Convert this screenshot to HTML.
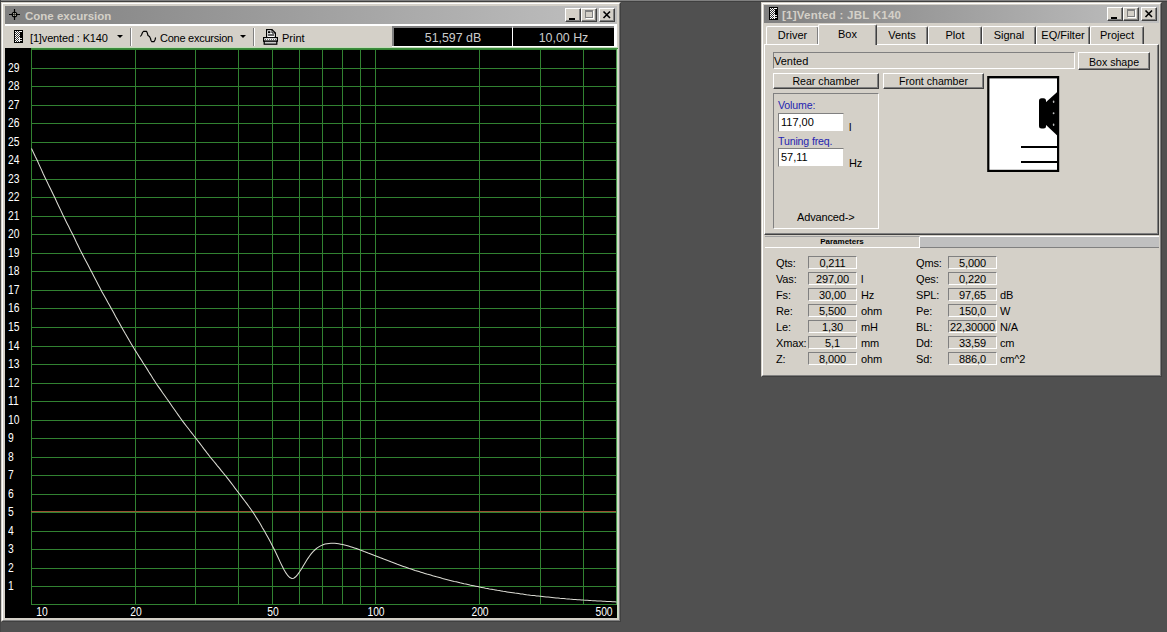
<!DOCTYPE html>
<html><head><meta charset="utf-8">
<style>
*{box-sizing:border-box;margin:0;padding:0}
html,body{width:1167px;height:632px;overflow:hidden;background:#505050;font-family:"Liberation Sans",sans-serif;font-size:11px;color:#000}
.abs{position:absolute}
.win{position:absolute;background:#d4d0c8;border-top:1px solid #d4d0c8;border-left:1px solid #d4d0c8;border-right:1px solid #404040;border-bottom:1px solid #404040}
.win>.in{position:absolute;left:0;top:0;right:0;bottom:0;border-top:1px solid #fff;border-left:1px solid #fff;border-right:1px solid #808080;border-bottom:1px solid #808080}
.title{position:absolute;height:18px;background:linear-gradient(to right,#808080,#c0c0c0);color:#d4d0c8;font-weight:bold;font-size:11px;line-height:18px;white-space:nowrap}
.tb{position:absolute;width:16px;height:14px;background:#d4d0c8;border-top:1px solid #fff;border-left:1px solid #fff;border-right:1px solid #404040;border-bottom:1px solid #404040;box-shadow:inset -1px -1px 0 #808080}
.sunk{border-top:1px solid #808080;border-left:1px solid #808080;border-right:1px solid #fff;border-bottom:1px solid #fff}
.yl{position:absolute;left:7.5px;width:20px;height:15px;line-height:15px;color:#fff;font-size:12px;transform:scaleX(0.86);transform-origin:0 0}
.xl{position:absolute;top:605.2px;width:40px;text-align:center;height:15px;line-height:15px;color:#fff;font-size:12px;transform:scaleX(0.86)}
.btn{position:absolute;background:#d4d0c8;border-top:1px solid #fff;border-left:1px solid #fff;border-right:1px solid #404040;border-bottom:1px solid #404040;box-shadow:inset -1px -1px 0 #808080;text-align:center;white-space:nowrap}
.fld{position:absolute;width:49px;height:13px;border-top:1px solid #808080;border-left:1px solid #808080;border-right:1px solid #fff;border-bottom:1px solid #fff;text-align:center;line-height:13px;font-size:11px;white-space:nowrap;letter-spacing:-0.1px}
.lab{position:absolute;line-height:14px;font-size:11px;white-space:nowrap;letter-spacing:-0.15px}
.tab{position:absolute;top:26px;height:18px;border-top:1px solid #fff;border-left:1px solid #fff;border-right:1px solid #404040;box-shadow:inset -1px 0 0 #808080;border-radius:2px 2px 0 0;text-align:center;line-height:16px;font-size:11px;background:#d4d0c8;white-space:nowrap}
</style></head><body>

<div class="abs" style="left:0;top:0;width:1167px;height:1px;background:#808080"></div>
<div class="abs" style="left:0;top:1px;width:1167px;height:1px;background:#404040"></div>
<div class="abs" style="left:0;top:0;width:1px;height:632px;background:#464646"></div>
<!-- LEFT WINDOW -->
<div class="win" style="left:1px;top:2px;width:620px;height:620px"><div class="in"></div></div>
<div class="title" style="left:5px;top:6px;width:612px"></div>
<div class="abs" style="left:25px;top:7px;height:18px;line-height:18px;color:#d4d0c8;font-weight:bold;font-size:11.5px">Cone excursion</div>
<!-- title icon crosshair -->
<svg class="abs" style="left:8px;top:8px" width="13" height="13"><path d="M6.5 1V12M1 6.5H12" stroke="#000" stroke-width="1.2"/><circle cx="6.5" cy="6.5" r="2.1" fill="none" stroke="#000" stroke-width="1.5"/><g fill="#f0f0e0"><rect x="5.2" y="5.2" width="1" height="1"/><rect x="6.8" y="5.2" width="1" height="1"/><rect x="5.2" y="6.8" width="1" height="1"/><rect x="6.8" y="6.8" width="1" height="1"/></g></svg>
<div class="tb" style="left:565px;top:8px"><div class="abs" style="left:3px;top:9px;width:6px;height:2px;background:#000"></div></div>
<div class="tb" style="left:581px;top:8px"><div class="abs" style="left:3px;top:1px;width:8px;height:8px;border:1px solid #808080;border-top-width:2px;box-shadow:1px 1px 0 #fff"></div></div>
<div class="tb" style="left:599px;top:8px"><svg class="abs" style="left:2px;top:1px" width="10" height="10"><path d="M1.5 1.5L8 8M8 1.5L1.5 8" stroke="#000" stroke-width="1.6"/></svg></div>

<!-- toolbar -->
<div class="abs" style="left:5px;top:24px;width:612px;height:2px;background:#fff"></div>
<div class="abs" style="left:5px;top:26px;width:612px;height:22px;background:#d4d0c8"></div>
<svg class="abs" style="left:14px;top:30px" width="9" height="13"><defs><pattern id="chk" width="2" height="2" patternUnits="userSpaceOnUse"><rect width="2" height="2" fill="#333"/><rect width="1" height="1" fill="#fff"/><rect x="1" y="1" width="1" height="1" fill="#fff"/></pattern></defs><rect width="9" height="13" fill="#000"/><rect x="1" y="1" width="5" height="11" fill="url(#chk)"/><rect x="6" y="1" width="2" height="1" fill="#fff"/><rect x="5" y="8" width="3" height="1" fill="#ddd"/><rect x="5" y="10" width="3" height="1" fill="#ddd"/></svg>
<div class="abs" style="left:30px;top:31px;line-height:14px;font-size:11px;white-space:nowrap;letter-spacing:-0.15px">[1]vented : K140</div>
<svg class="abs" style="left:117px;top:35px" width="7" height="4"><path d="M0 0H6L3 3Z" fill="#000"/></svg>
<div class="abs" style="left:130px;top:28px;width:1px;height:18px;background:#808080"></div>
<div class="abs" style="left:131px;top:28px;width:1px;height:18px;background:#fff"></div>
<svg class="abs" style="left:139px;top:30px" width="18" height="13"><path d="M1.3 6.5L2.5 5L3.5 2.5L4.5 1.3H7.5L8.3 3L9 5.5L10.5 6.5L11.5 8.5L12 10.5L12.8 11.6H15L16 10L16.6 7.5" stroke="#000" stroke-width="1.15" fill="none" stroke-linejoin="round"/></svg>
<div class="abs" style="left:160px;top:31px;line-height:14px;font-size:11px;white-space:nowrap;letter-spacing:-0.25px">Cone excursion</div>
<svg class="abs" style="left:240px;top:35px" width="7" height="4"><path d="M0 0H6L3 3Z" fill="#000"/></svg>
<div class="abs" style="left:253px;top:28px;width:1px;height:18px;background:#808080"></div>
<div class="abs" style="left:254px;top:28px;width:1px;height:18px;background:#fff"></div>
<svg class="abs" style="left:262px;top:28px" width="18" height="18"><defs><pattern id="dots" width="2" height="2" patternUnits="userSpaceOnUse"><rect width="2" height="2" fill="#fff"/><rect x="1" y="1" width="1" height="1" fill="#666"/></pattern></defs><path d="M4.6 9V1.6H10L13.4 5V9" fill="#fff" stroke="#000" stroke-width="1.2"/><path d="M10 1.6V5H13.4" fill="none" stroke="#000" stroke-width="1"/><rect x="6" y="3.2" width="2.4" height="2" fill="#000"/><rect x="6" y="6.4" width="6" height="1.2" fill="#000"/><rect x="1.6" y="9.6" width="13.8" height="3.6" fill="url(#dots)" stroke="#000" stroke-width="1.2"/><rect x="2.2" y="13.2" width="12.6" height="3" fill="#c8c8c8" stroke="#000" stroke-width="1.2"/></svg>
<div class="abs" style="left:282px;top:31px;line-height:14px;font-size:11px;white-space:nowrap">Print</div>

<!-- readouts -->
<div class="abs" style="left:392px;top:26px;width:225px;height:22px;background:#fff"></div>
<div class="abs" style="left:392px;top:26px;width:120px;height:20px;border-top:2px solid #808080;border-left:2px solid #808080;background:#000;color:#cccccc;text-align:center;line-height:17px;padding-top:1.5px;font-size:12.4px">51,597 dB</div>
<div class="abs" style="left:512px;top:26px;width:102px;height:20px;border-top:2px solid #808080;border-left:1px solid #fff;background:#000;color:#cccccc;text-align:center;line-height:17px;padding-top:1.5px;font-size:12.4px">10,00 Hz</div>

<!-- chart -->
<div class="abs" style="left:5px;top:48px;width:612px;height:570px;background:#000"></div>
<svg class="abs" style="left:0;top:0" width="1167" height="632" shape-rendering="crispEdges">
<g stroke="#318231" stroke-width="1">
<line x1="31" y1="604.5" x2="617" y2="604.5"/>
<line x1="31" y1="586.5" x2="617" y2="586.5"/>
<line x1="31" y1="568.5" x2="617" y2="568.5"/>
<line x1="31" y1="549.5" x2="617" y2="549.5"/>
<line x1="31" y1="531.5" x2="617" y2="531.5"/>
<line x1="31" y1="512.5" x2="617" y2="512.5"/>
<line x1="31" y1="494.5" x2="617" y2="494.5"/>
<line x1="31" y1="475.5" x2="617" y2="475.5"/>
<line x1="31" y1="457.5" x2="617" y2="457.5"/>
<line x1="31" y1="438.5" x2="617" y2="438.5"/>
<line x1="31" y1="420.5" x2="617" y2="420.5"/>
<line x1="31" y1="401.5" x2="617" y2="401.5"/>
<line x1="31" y1="383.5" x2="617" y2="383.5"/>
<line x1="31" y1="364.5" x2="617" y2="364.5"/>
<line x1="31" y1="346.5" x2="617" y2="346.5"/>
<line x1="31" y1="327.5" x2="617" y2="327.5"/>
<line x1="31" y1="308.5" x2="617" y2="308.5"/>
<line x1="31" y1="290.5" x2="617" y2="290.5"/>
<line x1="31" y1="271.5" x2="617" y2="271.5"/>
<line x1="31" y1="253.5" x2="617" y2="253.5"/>
<line x1="31" y1="234.5" x2="617" y2="234.5"/>
<line x1="31" y1="216.5" x2="617" y2="216.5"/>
<line x1="31" y1="197.5" x2="617" y2="197.5"/>
<line x1="31" y1="179.5" x2="617" y2="179.5"/>
<line x1="31" y1="160.5" x2="617" y2="160.5"/>
<line x1="31" y1="142.5" x2="617" y2="142.5"/>
<line x1="31" y1="123.5" x2="617" y2="123.5"/>
<line x1="31" y1="105.5" x2="617" y2="105.5"/>
<line x1="31" y1="86.5" x2="617" y2="86.5"/>
<line x1="31" y1="68.5" x2="617" y2="68.5"/>
<line x1="31" y1="49.5" x2="617" y2="49.5"/>
<line x1="31.5" y1="48" x2="31.5" y2="605"/>
<line x1="135.5" y1="48" x2="135.5" y2="605"/>
<line x1="195.5" y1="48" x2="195.5" y2="605"/>
<line x1="238.5" y1="48" x2="238.5" y2="605"/>
<line x1="272.5" y1="48" x2="272.5" y2="605"/>
<line x1="299.5" y1="48" x2="299.5" y2="605"/>
<line x1="322.5" y1="48" x2="322.5" y2="605"/>
<line x1="342.5" y1="48" x2="342.5" y2="605"/>
<line x1="360.5" y1="48" x2="360.5" y2="605"/>
<line x1="375.5" y1="48" x2="375.5" y2="605"/>
<line x1="479.5" y1="48" x2="479.5" y2="605"/>
<line x1="540.5" y1="48" x2="540.5" y2="605"/>
<line x1="583.5" y1="48" x2="583.5" y2="605"/>
<line x1="616.5" y1="48" x2="616.5" y2="605"/>
<line x1="31" y1="48.5" x2="617" y2="48.5"/>
</g>
<line x1="31" y1="511.5" x2="617" y2="511.5" stroke="#9a5232" stroke-width="1"/>
<line x1="617.5" y1="47" x2="617.5" y2="618" stroke="#c4e4c0" stroke-width="1"/>
<line x1="31" y1="47.5" x2="618" y2="47.5" stroke="#c0dcb8" stroke-width="1"/>
<line x1="31" y1="48.5" x2="618" y2="48.5" stroke="#3c8a3c" stroke-width="1"/>
<line x1="616.5" y1="48" x2="616.5" y2="605" stroke="#48944a" stroke-width="1"/>
</svg>
<svg class="abs" style="left:0;top:0" width="617" height="618">
<polyline points="31.5,148.6 33.5,152.7 35.4,156.8 37.4,160.8 39.3,165.1 41.3,169.4 43.2,173.7 45.2,177.9 47.2,182.0 49.1,186.1 51.1,190.1 53.0,194.1 55.0,198.1 56.9,202.3 58.9,206.5 60.9,210.6 62.8,214.8 64.8,218.8 66.7,222.7 68.7,226.6 70.6,230.5 72.6,234.3 74.6,238.3 76.5,242.4 78.5,246.4 80.4,250.4 82.4,254.3 84.3,258.1 86.3,261.8 88.3,265.5 90.2,269.2 92.2,272.9 94.1,276.7 96.1,280.5 98.0,284.3 100.0,288.1 101.9,291.8 103.9,295.3 105.9,298.8 107.8,302.3 109.8,305.7 111.7,309.2 113.7,312.8 115.6,316.4 117.6,319.9 119.6,323.4 121.5,326.9 123.5,330.4 125.4,333.8 127.4,337.2 129.3,340.6 131.3,344.0 133.3,347.3 135.2,350.4 137.2,353.5 139.1,356.6 141.1,359.6 143.0,362.7 145.0,365.8 147.0,368.9 148.9,372.0 150.9,375.1 152.8,378.2 154.8,381.3 156.7,384.3 158.7,387.1 160.7,389.9 162.6,392.7 164.6,395.5 166.5,398.3 168.5,401.0 170.4,403.8 172.4,406.7 174.4,409.5 176.3,412.3 178.3,415.1 180.2,417.8 182.2,420.6 184.1,423.1 186.1,425.7 188.1,428.2 190.0,430.8 192.0,433.3 193.9,435.8 195.9,438.3 197.8,440.8 199.8,443.4 201.8,446.0 203.7,448.6 205.7,451.1 207.6,453.7 209.6,456.2 211.5,458.7 213.5,461.0 215.5,463.4 217.4,465.8 219.4,468.2 221.3,470.6 223.3,473.0 225.2,475.3 227.2,477.9 229.2,480.4 231.1,482.9 233.1,485.5 235.0,488.1 237.0,490.7 238.9,493.3 240.9,495.9 242.8,498.4 244.8,501.0 246.8,503.6 248.7,506.3 250.7,509.0 252.6,511.8 254.6,514.8 256.5,517.9 258.5,521.0 260.5,524.3 262.4,527.7 264.4,531.1 266.3,534.5 268.3,538.0 270.2,541.6 272.2,545.4 274.2,549.2 276.1,553.3 278.1,557.5 280.0,561.6 282.0,565.7 283.9,569.6 285.9,572.9 287.9,575.7 289.8,577.6 291.8,578.5 293.7,578.2 295.7,576.8 297.6,574.6 299.6,571.8 301.6,568.8 303.5,565.4 305.5,562.2 307.4,559.1 309.4,556.2 311.3,553.7 313.3,551.4 315.3,549.5 317.2,547.9 319.2,546.6 321.1,545.6 323.1,544.7 325.0,544.1 327.0,543.7 329.0,543.4 330.9,543.3 332.9,543.2 334.8,543.3 336.8,543.5 338.7,543.8 340.7,544.2 342.7,544.6 344.6,545.0 346.6,545.5 348.5,546.1 350.5,546.7 352.4,547.3 354.4,547.9 356.4,548.6 358.3,549.3 360.3,550.0 362.2,550.7 364.2,551.5 366.1,552.2 368.1,553.0 370.1,553.7 372.0,554.5 374.0,555.3 375.9,556.0 377.9,556.8 379.8,557.6 381.8,558.3 383.7,559.1 385.7,559.8 387.7,560.6 389.6,561.3 391.6,562.1 393.5,562.8 395.5,563.5 397.4,564.3 399.4,565.0 401.4,565.7 403.3,566.4 405.3,567.1 407.2,567.8 409.2,568.5 411.1,569.1 413.1,569.7 415.1,570.4 417.0,571.0 419.0,571.6 420.9,572.2 422.9,572.8 424.8,573.4 426.8,574.0 428.8,574.5 430.7,575.1 432.7,575.7 434.6,576.2 436.6,576.8 438.5,577.3 440.5,577.8 442.5,578.4 444.4,578.9 446.4,579.4 448.3,579.9 450.3,580.4 452.2,580.9 454.2,581.4 456.2,581.8 458.1,582.3 460.1,582.8 462.0,583.2 464.0,583.7 465.9,584.1 467.9,584.5 469.9,585.0 471.8,585.4 473.8,585.8 475.7,586.2 477.7,586.6 479.6,587.0 481.6,587.4 483.6,587.8 485.5,588.2 487.5,588.5 489.4,588.9 491.4,589.2 493.3,589.6 495.3,589.9 497.3,590.3 499.2,590.6 501.2,590.9 503.1,591.3 505.1,591.6 507.0,591.9 509.0,592.2 511.0,592.5 512.9,592.8 514.9,593.1 516.8,593.3 518.8,593.6 520.7,593.9 522.7,594.1 524.6,594.4 526.6,594.7 528.6,594.9 530.5,595.2 532.5,595.4 534.4,595.6 536.4,595.9 538.3,596.1 540.3,596.3 542.3,596.5 544.2,596.7 546.2,596.9 548.1,597.1 550.1,597.3 552.0,597.5 554.0,597.7 556.0,597.9 557.9,598.1 559.9,598.3 561.8,598.4 563.8,598.6 565.7,598.8 567.7,598.9 569.7,599.1 571.6,599.2 573.6,599.4 575.5,599.5 577.5,599.7 579.4,599.8 581.4,599.9 583.4,600.1 585.3,600.2 587.3,600.3 589.2,600.4 591.2,600.6 593.1,600.7 595.1,600.8 597.1,600.9 599.0,601.0 601.0,601.1 602.9,601.2 604.9,601.3 606.8,601.4 608.8,601.5 610.8,601.6 612.7,601.7 614.7,601.8 616.6,601.9" fill="none" stroke="#dcdcd4" stroke-width="1.05"/>
</svg>
<div class="yl" style="top:579.2px">1</div>
<div class="yl" style="top:561.2px">2</div>
<div class="yl" style="top:542.2px">3</div>
<div class="yl" style="top:524.2px">4</div>
<div class="yl" style="top:505.2px">5</div>
<div class="yl" style="top:487.2px">6</div>
<div class="yl" style="top:468.2px">7</div>
<div class="yl" style="top:450.2px">8</div>
<div class="yl" style="top:431.2px">9</div>
<div class="yl" style="top:413.2px">10</div>
<div class="yl" style="top:394.2px">11</div>
<div class="yl" style="top:376.2px">12</div>
<div class="yl" style="top:357.2px">13</div>
<div class="yl" style="top:339.2px">14</div>
<div class="yl" style="top:320.2px">15</div>
<div class="yl" style="top:301.2px">16</div>
<div class="yl" style="top:283.2px">17</div>
<div class="yl" style="top:264.2px">18</div>
<div class="yl" style="top:246.2px">19</div>
<div class="yl" style="top:227.2px">20</div>
<div class="yl" style="top:209.2px">21</div>
<div class="yl" style="top:190.2px">22</div>
<div class="yl" style="top:172.2px">23</div>
<div class="yl" style="top:153.2px">24</div>
<div class="yl" style="top:135.2px">25</div>
<div class="yl" style="top:116.2px">26</div>
<div class="yl" style="top:98.2px">27</div>
<div class="yl" style="top:79.2px">28</div>
<div class="yl" style="top:61.2px">29</div>
<div class="xl" style="left:22.200000000000003px">10</div>
<div class="xl" style="left:115.5px">20</div>
<div class="xl" style="left:252.5px">50</div>
<div class="xl" style="left:356px">100</div>
<div class="xl" style="left:460px">200</div>
<div class="xl" style="left:583.5px">500</div>

<!-- RIGHT WINDOW -->
<div class="win" style="left:761px;top:2px;width:401px;height:375px"><div class="in"></div></div>
<div class="title" style="left:764px;top:5px;width:395px"></div>
<svg class="abs" style="left:769px;top:7px" width="9" height="13"><rect width="9" height="13" fill="#000"/><rect x="1" y="1" width="5" height="11" fill="url(#chk)"/><rect x="6" y="1" width="2" height="1" fill="#fff"/><rect x="5" y="8" width="3" height="1" fill="#ddd"/><rect x="5" y="10" width="3" height="1" fill="#ddd"/></svg>
<div class="abs" style="left:782px;top:6px;height:18px;line-height:18px;color:#d4d0c8;font-weight:bold;font-size:11.5px;white-space:nowrap;letter-spacing:0.25px">[1]Vented : JBL K140</div>
<div class="tb" style="left:1107px;top:7px"><div class="abs" style="left:3px;top:9px;width:6px;height:2px;background:#000"></div></div>
<div class="tb" style="left:1123px;top:7px"><div class="abs" style="left:3px;top:1px;width:8px;height:8px;border:1px solid #808080;border-top-width:2px;box-shadow:1px 1px 0 #fff"></div></div>
<div class="tb" style="left:1141px;top:7px"><svg class="abs" style="left:2px;top:1px" width="10" height="10"><path d="M1.5 1.5L8 8M8 1.5L1.5 8" stroke="#000" stroke-width="1.6"/></svg></div>

<!-- tab panel -->
<div class="abs" style="left:764px;top:44px;width:395px;height:191px;border-top:1px solid #fff;border-left:1px solid #fff;border-right:1px solid #404040;border-bottom:1px solid #404040;box-shadow:inset -1px -1px 0 #808080"></div>
<div class="tab" style="left:766px;width:53px">Driver</div>
<div class="tab" style="left:818px;top:24px;width:59px;height:21px;z-index:2;line-height:18.4px">Box</div>
<div class="tab" style="left:876px;width:52px">Vents</div>
<div class="tab" style="left:928px;width:54px">Plot</div>
<div class="tab" style="left:982px;width:54px">Signal</div>
<div class="tab" style="left:1036px;width:54px">EQ/Filter</div>
<div class="tab" style="left:1090px;width:54px">Project</div>

<div class="abs sunk" style="left:773px;top:52px;width:302px;height:17px;line-height:16.5px;font-size:11px;padding-left:0">Vented</div>
<div class="btn" style="left:1078px;top:52px;width:72px;height:18px;line-height:18px;font-size:10.6px">Box shape</div>
<div class="btn" style="left:773px;top:73px;width:106px;height:16px;line-height:15px;font-size:10.6px">Rear chamber</div>
<div class="btn" style="left:883px;top:73px;width:101px;height:16px;line-height:15px;font-size:10.6px">Front chamber</div>

<div class="abs" style="left:773px;top:93px;width:106px;height:136px;border-top:1px solid #808080;border-left:1px solid #808080;border-right:1px solid #fff;border-bottom:1px solid #fff"></div>
<div class="lab" style="left:778px;top:98px;color:#2424b0;font-size:10.6px">Volume:</div>
<div class="abs" style="left:778px;top:113px;width:66px;height:19px;background:#fff;border-top:1px solid #808080;border-left:1px solid #808080;border-right:1px solid #d4d0c8;border-bottom:1px solid #d4d0c8;font-size:11px;line-height:16px;padding-left:2px">117,00</div>
<div class="lab" style="left:849px;top:120px;font-size:11px">l</div>
<div class="lab" style="left:778px;top:134px;color:#2424b0;font-size:10.6px">Tuning freq.</div>
<div class="abs" style="left:778px;top:148px;width:66px;height:19px;background:#fff;border-top:1px solid #808080;border-left:1px solid #808080;border-right:1px solid #d4d0c8;border-bottom:1px solid #d4d0c8;font-size:11px;line-height:16px;padding-left:2px">57,11</div>
<div class="lab" style="left:849px;top:156px;font-size:11px">Hz</div>
<div class="lab" style="left:797px;top:210px;font-size:11px">Advanced-&gt;</div>

<!-- box graphic -->
<svg class="abs" style="left:986px;top:75px" width="76" height="99">
<rect x="1.2" y="1" width="72" height="96" fill="#000"/>
<rect x="3.4" y="3.4" width="67.6" height="91.4" fill="#fff"/>
<path d="M35 72H72M35 87H72" stroke="#000" stroke-width="2"/>
<rect x="53" y="23.2" width="7" height="30.4" rx="2.5" fill="#000"/>
<path d="M59 28L71.2 17V60.6L59 49Z" fill="#000"/>
<g fill="#bbb"><ellipse cx="67.6" cy="26.8" rx="0.8" ry="1.2"/><ellipse cx="67.6" cy="38.2" rx="0.9" ry="1"/><ellipse cx="67.6" cy="49.8" rx="0.8" ry="1.2"/></g>
</svg>

<!-- parameters header -->
<div class="abs" style="left:765px;top:236px;width:394px;height:12px;background:#c0c0c0;border-top:1px solid #fff;border-bottom:1px solid #808080"></div>
<div class="abs" style="left:765px;top:236px;width:155px;height:12px;background:#d4d0c8;border-top:1px solid #a0a0a0;border-right:1px solid #fff;border-bottom:1px solid #fff;text-align:center;font-size:8px;font-weight:bold;line-height:10px;letter-spacing:0">Parameters</div>
<div class="lab" style="left:776px;top:256px">Qts:</div><div class="fld" style="left:808px;top:256px">0,211</div><div class="lab" style="left:861px;top:256px"></div>
<div class="lab" style="left:776px;top:272px">Vas:</div><div class="fld" style="left:808px;top:272px">297,00</div><div class="lab" style="left:861px;top:272px">l</div>
<div class="lab" style="left:776px;top:288px">Fs:</div><div class="fld" style="left:808px;top:288px">30,00</div><div class="lab" style="left:861px;top:288px">Hz</div>
<div class="lab" style="left:776px;top:304px">Re:</div><div class="fld" style="left:808px;top:304px">5,500</div><div class="lab" style="left:861px;top:304px">ohm</div>
<div class="lab" style="left:776px;top:320px">Le:</div><div class="fld" style="left:808px;top:320px">1,30</div><div class="lab" style="left:861px;top:320px">mH</div>
<div class="lab" style="left:776px;top:336px">Xmax:</div><div class="fld" style="left:808px;top:336px">5,1</div><div class="lab" style="left:861px;top:336px">mm</div>
<div class="lab" style="left:776px;top:352px">Z:</div><div class="fld" style="left:808px;top:352px">8,000</div><div class="lab" style="left:861px;top:352px">ohm</div>
<div class="lab" style="left:916px;top:256px">Qms:</div><div class="fld" style="left:948px;top:256px">5,000</div><div class="lab" style="left:1000px;top:256px"></div>
<div class="lab" style="left:916px;top:272px">Qes:</div><div class="fld" style="left:948px;top:272px">0,220</div><div class="lab" style="left:1000px;top:272px"></div>
<div class="lab" style="left:916px;top:288px">SPL:</div><div class="fld" style="left:948px;top:288px">97,65</div><div class="lab" style="left:1000px;top:288px">dB</div>
<div class="lab" style="left:916px;top:304px">Pe:</div><div class="fld" style="left:948px;top:304px">150,0</div><div class="lab" style="left:1000px;top:304px">W</div>
<div class="lab" style="left:916px;top:320px">BL:</div><div class="fld" style="left:948px;top:320px">22,30000</div><div class="lab" style="left:1000px;top:320px">N/A</div>
<div class="lab" style="left:916px;top:336px">Dd:</div><div class="fld" style="left:948px;top:336px">33,59</div><div class="lab" style="left:1000px;top:336px">cm</div>
<div class="lab" style="left:916px;top:352px">Sd:</div><div class="fld" style="left:948px;top:352px">886,0</div><div class="lab" style="left:1000px;top:352px">cm^2</div>

</body></html>
